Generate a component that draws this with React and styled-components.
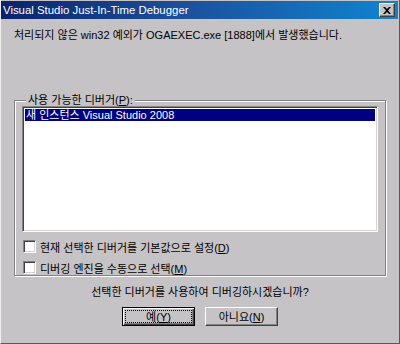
import React from "react";
import styled, { createGlobalStyle } from "styled-components";

const Global = createGlobalStyle`
  html, body {
    margin: 0;
    padding: 0;
    background: #c6c3c6;
  }
  * {
    box-sizing: border-box;
  }
`;

const font = `"Liberation Sans", "Noto Sans CJK KR", sans-serif`;

const Window = styled.div`
  width: 400px;
  height: 344px;
  display: flex;
  flex-direction: column;
  background: #c6c3c6;
  border-left: 1px solid #efefef;
  border-right: 1px solid #5a595a;
  border-bottom: 1px solid #5a595a;
  font-family: ${font};
  font-size: 11px;
  color: #000;
`;

const TitleBar = styled.div`
  height: 18px;
  margin: 1px 1px 0 0;
  display: flex;
  align-items: center;
  justify-content: space-between;
  padding: 0 3px 0 2px;
  background: linear-gradient(90deg, #0a246a 0%, #1c4f9c 45%, #1084d0 100%);
  color: #fff;
  font-size: 11.4px;
`;

const CloseButton = styled.div`
  width: 16px;
  height: 14px;
  display: flex;
  align-items: center;
  justify-content: center;
  background: #c6c3c6;
  border: 1px solid;
  border-color: #fff #404040 #404040 #fff;
  box-shadow: inset -1px -1px 0 #808080;
`;

const Body = styled.div`
  flex: 1;
  display: flex;
  flex-direction: column;
  padding: 0 13px 0 13px;
`;

const Message = styled.div`
  margin-top: 9px;
  height: 14px;
  line-height: 14px;
  white-space: nowrap;
`;

const Group = styled.fieldset`
  margin: 53px 0 0 0;
  padding: 0 7px 0 7px;
  height: 181px;
  flex: none;
  border: 1px solid #848284;
  box-shadow: 1px 1px 0 #fff, inset 1px 1px 0 #fff;
  display: flex;
  flex-direction: column;
`;

const Legend = styled.legend`
  margin-left: 4px;
  padding: 0 2px;
  height: 11px;
  line-height: 11px;
  background: #c6c3c6;
`;

const Underline = styled.span`
  text-decoration: underline;
`;

const ListBox = styled.div`
  flex: none;
  margin-top: 0;
  height: 126px;
  background: #fff;
  border: 1px solid;
  border-color: #848284 #fff #fff #848284;
  box-shadow: inset 1px 1px 0 #424142, inset -1px -1px 0 #d6d3ce;
  padding: 2px;
`;

const ListItem = styled.div`
  height: 12px;
  line-height: 12px;
  padding-left: 1px;
  background: ${(p) => (p.selected ? "#000080" : "transparent")};
  color: ${(p) => (p.selected ? "#fff" : "#000")};
  white-space: nowrap;
`;

const Checks = styled.div`
  flex: none;
  display: flex;
  flex-direction: column;
  gap: 8px;
  margin-top: 8px;
`;

const CheckRow = styled.label`
  display: flex;
  align-items: center;
  gap: 4px;
  height: 13px;
  padding-left: 1px;
  white-space: nowrap;
`;

const Box = styled.span`
  width: 13px;
  height: 13px;
  flex: none;
  background: #fff;
  border: 1px solid;
  border-color: #848284 #fff #fff #848284;
  box-shadow: inset 1px 1px 0 #424142, inset -1px -1px 0 #d6d3ce;
`;

const Question = styled.div`
  margin-top: 9px;
  text-align: center;
  line-height: 14px;
  white-space: nowrap;
`;

const Buttons = styled.div`
  display: flex;
  justify-content: center;
  gap: 10px;
  margin-top: 8px;
`;

const Button = styled.div`
  width: 73px;
  height: 19px;
  display: flex;
  align-items: stretch;
  justify-content: center;
  padding: ${(p) => (p.primary ? "3px" : "0")};
  background: #c6c3c6;
  border: 1px solid;
  border-color: ${(p) => (p.primary ? "#000" : "#fff #424142 #424142 #fff")};
  box-shadow: ${(p) =>
    p.primary
      ? "inset 1px 1px 0 #fff, inset -1px -1px 0 #424142, inset -2px -2px 0 #848284"
      : "inset -1px -1px 0 #848284"};
`;

const Caption = styled.span`
  flex: 1;
  display: flex;
  align-items: center;
  justify-content: center;
  line-height: 12px;
  outline: ${(p) => (p.focused ? "1px dotted #000" : "none")};
`;

export default function App() {
  return (
    <>
      <Global />
      <Window>
        <TitleBar>
          <span>Visual Studio Just-In-Time Debugger</span>
          <CloseButton>
            <svg width="8" height="7" viewBox="0 0 8 7">
              <path d="M0 0h2l2 2 2-2h2L5 3.5 8 7H6L4 5 2 7H0l3-3.5z" fill="#000" />
            </svg>
          </CloseButton>
        </TitleBar>
        <Body>
          <Message>처리되지 않은 win32 예외가 OGAEXEC.exe [1888]에서 발생했습니다.</Message>
          <Group>
            <Legend>
              사용 가능한 디버거(<Underline>P</Underline>):
            </Legend>
            <ListBox>
              <ListItem selected>새 인스턴스 Visual Studio 2008</ListItem>
            </ListBox>
            <Checks>
              <CheckRow>
                <Box />
                <span>
                  현재 선택한 디버거를 기본값으로 설정(<Underline>D</Underline>)
                </span>
              </CheckRow>
              <CheckRow>
                <Box />
                <span>
                  디버깅 엔진을 수동으로 선택(<Underline>M</Underline>)
                </span>
              </CheckRow>
            </Checks>
          </Group>
          <Question>선택한 디버거를 사용하여 디버깅하시겠습니까?</Question>
          <Buttons>
            <Button primary>
              <Caption focused>
                <span>
                  예(<Underline>Y</Underline>)
                </span>
              </Caption>
            </Button>
            <Button>
              <Caption>
                <span>
                  아니요(<Underline>N</Underline>)
                </span>
              </Caption>
            </Button>
          </Buttons>
        </Body>
      </Window>
    </>
  );
}
